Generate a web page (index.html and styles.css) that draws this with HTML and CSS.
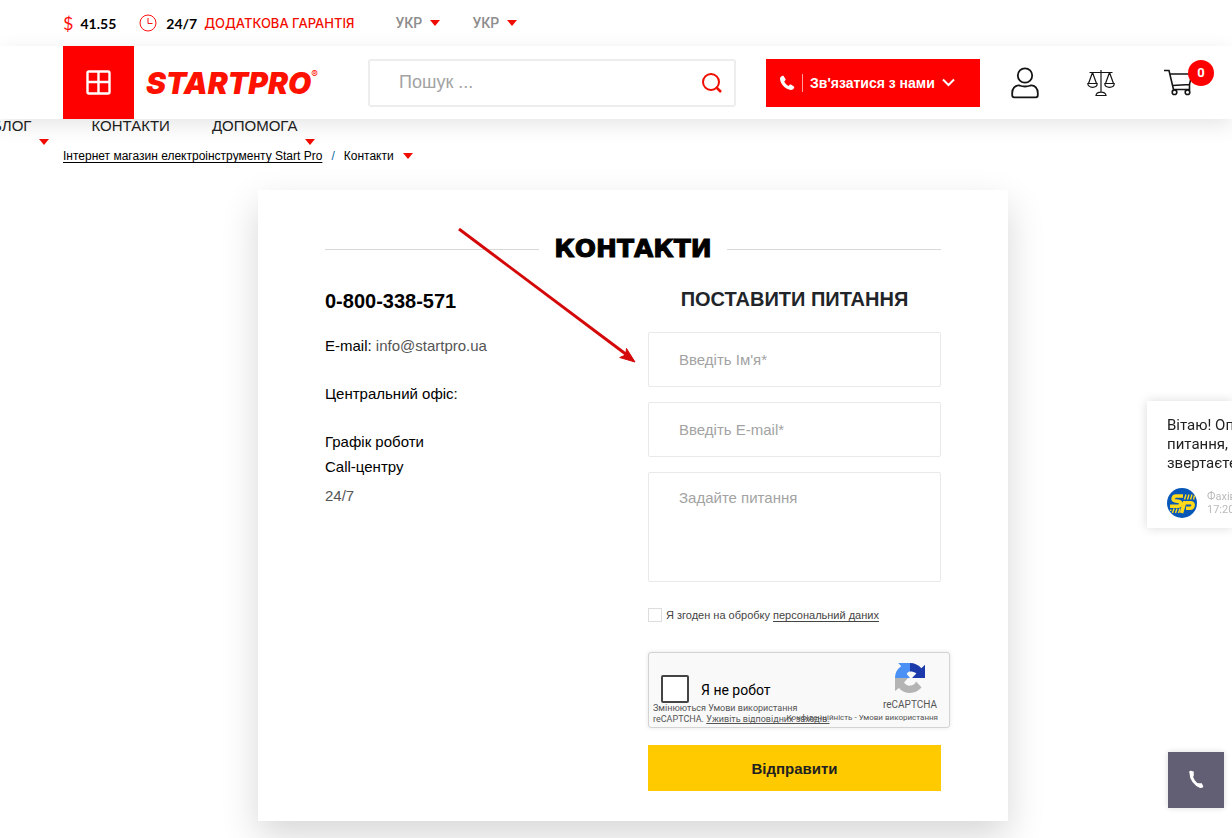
FILE: index.html
```html
<!DOCTYPE html>
<html lang="uk">
<head>
<meta charset="utf-8">
<meta name="viewport" content="width=device-width, initial-scale=1">
<title>Контакти</title>
<link rel="stylesheet" href="styles.css">
</head>
<body>
<div class="topbar">
  <span class="rate"><span class="dollar">$</span>41.55</span>
  <span class="warranty">
    <svg width="18" height="18" viewBox="0 0 18 18" fill="none" stroke="#f11" stroke-width="1"><circle cx="9" cy="9" r="8"/><path d="M9 4v5.500h4.500"/></svg>
    <b>24/7</b> <a href="#">ДОДАТКОВА ГАРАНТІЯ</a>
  </span>
  <label class="lang"><select aria-label="Мова"><option>УКР</option></select><span class="caret"></span></label>
  <label class="lang"><select aria-label="Мова каталогу"><option>УКР</option></select><span class="caret"></span></label>
</div>

<header class="header">
  <button class="catalog" aria-label="Каталог">
    <svg width="25" height="25" viewBox="0 0 25 25" fill="none" stroke="#fff" stroke-width="2.400"><rect x="1.500" y="1.500" width="22" height="22" rx="1.500"/><path d="M12.500 2v21M2 12h21"/></svg>
  </button>
  <a class="logo" href="#">STARTPRO<sup>®</sup></a>
  <form class="search">
    <input type="text" aria-label="Пошук" placeholder="Пошук ...">
    <button type="button" aria-label="Знайти">
      <svg width="22" height="22" viewBox="0 0 22 22" fill="none" stroke="#f10c00" stroke-width="2"><circle cx="11" cy="10" r="8"/><path d="M16 15l5 5" stroke-width="2.500"/></svg>
    </button>
  </form>
  <button class="contact">
    <svg width="16" height="16" viewBox="0 0 16 16" fill="#fff"><path d="M3.400.8C2.300 1.200.8 2.300 1 4.100c.6 5.400 5.500 10.500 11 11 1.500.1 2.800-1.300 3.200-2.500.1-.4 0-.7-.3-1l-3-2c-.4-.3-.9-.2-1.200.1l-1.300 1.200C7.500 9.900 6 8.300 5.200 6.500l1.200-1.200c.3-.3.4-.7.2-1.100L4.600 1.100C4.300.8 3.900.6 3.400.8z"/></svg>
    <span class="divider"></span>
    <span>Зв'язатися з нами</span>
    <svg width="13" height="9" viewBox="0 0 13 9" fill="none" stroke="#fff" stroke-width="2"><path d="M1 1.500l5.500 5.500L12 1.500"/></svg>
  </button>
  <div class="tools">
    <a href="#" aria-label="Кабінет"><svg width="28" height="32" viewBox="0 0 28 32" fill="none" stroke="#151515" stroke-width="1.800"><circle cx="14" cy="8.500" r="7.200"/><path d="M8.500 18.500c3.500 1.300 7.500 1.300 11 0 4.500-.5 7.300 3 7.300 7.500v2.300c0 1.300-.7 2-2 2H3.200c-1.300 0-2-.7-2-2V26c0-4.500 2.800-8 7.300-7.500z"/></svg></a>
    <a href="#" aria-label="Порівняння"><svg width="28" height="28" viewBox="0 0 28 28" fill="none" stroke="#151515" stroke-width="1.200"><path d="M14 1v22M2.500 3.500h23M5.500 3.500l-4 11M5.500 3.500l4 11M22.500 3.500l-4 11M22.500 3.500l4 11M.8 14.500h9.400c0 2-1.800 3.800-4.700 3.800S.8 16.500.8 14.500zM17.800 14.500h9.400c0 2-1.800 3.800-4.700 3.800s-4.700-1.800-4.700-3.800zM9 26.500c.3-2.500 2.300-3.300 5-3.300s4.700.8 5 3.300z"/></svg></a>
    <a class="cart" href="#" aria-label="Кошик"><svg width="30" height="27" viewBox="0 0 30 27" fill="none" stroke="#151515" stroke-width="1.600"><path d="M1 1.500h5l4.500 19M7.200 5H29l-2.500 10.500-17 1M26.500 15.500v5h-16"/><circle cx="11.500" cy="23.200" r="2.300"/><circle cx="24.500" cy="23.200" r="2.300"/></svg><span class="badge">0</span></a>
  </div>
</header>

<nav class="menu">
  <a href="#">БЛОГ<span class="caret"></span></a>
  <a href="#">КОНТАКТИ</a>
  <a href="#">ДОПОМОГА<span class="caret"></span></a>
</nav>

<div class="crumbs">
  <a href="#">Інтернет магазин електроінструменту Start Pro</a>
  <span class="slash">/</span>
  <span>Контакти</span>
  <span class="caret"></span>
</div>

<main class="page">
  <section class="card">
    <h1>КОНТАКТИ</h1>
    <div class="columns">
      <div class="info">
        <h2>0-800-338-571</h2>
        <p>E-mail: <a href="#">info@startpro.ua</a></p>
        <p>Центральний офіс:</p>
        <p>Графік роботи<br>Call-центру</p>
        <p class="hours">24/7</p>
      </div>
      <form class="ask">
        <h2>ПОСТАВИТИ ПИТАННЯ</h2>
        <input class="field" type="text" aria-label="Ім'я" placeholder="Введіть Ім'я*">
        <input class="field" type="email" aria-label="E-mail" placeholder="Введіть E-mail*">
        <textarea class="field area" aria-label="Питання" placeholder="Задайте питання"></textarea>
        <div class="agree">
          <input type="checkbox" id="agree"><label for="agree">Я згоден на обробку</label> <a href="#">персональний даних</a>
        </div>
        <div class="captcha">
          <div class="captcha-check"><input type="checkbox" id="robot"><label for="robot">Я не робот</label></div>
          <div class="captcha-brand">
            <svg width="32" height="32" viewBox="0 0 32 32"><path fill="#4a90f5" d="M16 1v8.500c-1.800.3-3 1.300-3.300 2.500l3.300 4H1C1 11 3 7 7.200 4.200l-3-3.200z"/><path fill="#1c3aa9" d="M16 1c4.600 0 8.600 2 11.400 5.200L31 2.800V16H18l4.400-4.500C20.500 10 18.500 9.500 16 9.500z"/><path fill="#b4b4b4" d="M1 16h13l-4 4.500c1.500 2.500 4 3.500 7 3 2.500-.4 4.200-1.500 5-4l5.500 5.800C25 28.800 20.500 31 16 31c-4.500 0-8.300-1.700-11-5l-4 3z"/></svg>
            <span>reCAPTCHA</span>
          </div>
          <p class="captcha-note">Змінюються Умови використання<br>reCAPTCHA. <a href="#">Уживіть відповідних заходів.</a></p>
          <p class="captcha-terms"><a href="#">Конфіденційність</a> - <a href="#">Умови використання</a></p>
        </div>
        <button class="submit" type="button">Відправити</button>
      </form>
    </div>
    <svg class="arrow" width="180" height="136" viewBox="0 0 180 136"><path d="M1 1l168 126" stroke="#d40808" stroke-width="3"/><path d="M177 134l-8.500-13.500-.8 6.500-6 2.500z" fill="#d40808" stroke="#d40808"/></svg>
  </section>
</main>

<aside class="chat">
  <p>Вітаю! Оп<br>питання,<br>звертаєте</p>
  <div class="agent">
    <svg width="30" height="30" viewBox="0 0 30 30"><circle cx="15" cy="15" r="15" fill="#0757b8"/><g fill="none" stroke="#ffd91a"><path stroke-width="3.600" d="M16 8H9c-3 0-4 4-1 4.700l4 .8c3 .7 2 4.700-1 4.700H3M14.500 25l3-10.200h6.500c3.500 0 2.500 5.500-1 5.500H19"/><path stroke-width="1.400" d="M17.500 11.500l1.500-5M20.500 11.500l1.500-5M23.500 11.500l1.500-5M26.500 11.500l1-4M4 21.500L3.500 23M7 20.500L5.500 25M10 20.500L8.500 25M13 20.500L11.500 25"/></g></svg>
    <span>Фахів<br>17:20</span>
  </div>
</aside>

<button class="call" aria-label="Подзвонити">
  <svg width="18" height="22" viewBox="0 0 18 22" fill="none" stroke="#fff" stroke-linecap="round"><path stroke-width="3" d="M4 4c0 6 4 11.500 9.500 13.500"/><path stroke-width="2.500" d="M3.500 3l2 .5v3M10.500 15.500l3.500 0 1 2"/></svg>
</button>
</body>
</html>
```
FILE: styles.css
```css
* { box-sizing: border-box; }
body {
  margin: 0;
  min-height: 100vh;
  background: #fff;
  color: #000;
  font-family: "Liberation Sans", Arial, sans-serif;
  font-size: 15px;
}
h1, h2, p { margin: 0; }
a { color: inherit; text-decoration: none; }
button, input, select, textarea { font: inherit; margin: 0; }
button { border: 0; padding: 0; cursor: pointer; }
svg { display: block; flex: none; }
.caret {
  flex: none;
  width: 10px;
  border: 5px solid transparent;
  border-top: 6px solid #f10c00;
  border-bottom: 0;
}

.topbar {
  display: flex;
  align-items: center;
  height: 46px;
  padding-left: 63px;
  font-family: Lato, sans-serif;
  font-size: 14px;
}
.rate { display: flex; align-items: center; gap: 7px; margin-right: 23px; font-weight: 700; }
.dollar { color: #f11; font-size: 18px; font-weight: 400; }
.warranty { display: flex; align-items: center; gap: 7px; margin-right: 41px; }
.warranty svg { margin-right: 2px; }
.warranty a { color: #f10c00; font: 500 13px Inter, sans-serif; }
.lang { display: flex; align-items: center; gap: 8px; margin-right: 32px; }
.lang select {
  appearance: none;
  border: 0;
  padding: 0;
  background: none;
  color: #8d8d8d;
  font-family: Roboto, sans-serif;
  font-weight: 500;
}

.header {
  position: relative;
  display: flex;
  align-items: center;
  height: 73px;
  padding: 0 18px 0 63px;
  background: #fff;
  box-shadow: 0 6px 20px rgba(0, 0, 0, .1);
}
.catalog { display: grid; place-items: center; align-self: stretch; width: 71px; background: #f00; }
.logo {
  display: flex;
  width: 222px;
  margin-left: 12px;
  color: #f10;
  font: italic 900 30px/32px Inter, sans-serif;
}
.logo sup { font: 400 10px/14px Inter, sans-serif; }
.search {
  display: flex;
  align-items: center;
  flex: 1;
  height: 48px;
  padding: 0 12px 0 29px;
  border: 2px solid #ededed;
  border-radius: 3px;
}
.search input { flex: 1; min-width: 0; border: 0; padding: 0; outline: 0; font-size: 18px; }
::placeholder { color: #a3a3a3; opacity: 1; }
.search button { background: none; }
.contact {
  display: flex;
  align-items: center;
  gap: 7px;
  width: 214px;
  height: 48px;
  margin-left: 30px;
  padding-left: 13px;
  background: #f00;
  color: #fff;
  font: 700 14px "Liberation Sans", Arial, sans-serif;
}
.divider { width: 1px; height: 18px; background: #ff9c9c; }
.tools { display: flex; align-items: center; gap: 48px; margin-left: 31px; }
.cart { position: relative; width: 51px; }
.badge {
  position: absolute;
  top: -9px;
  right: 0;
  width: 26px;
  border-radius: 50%;
  background: #f00;
  color: #fff;
  font: 700 13px/26px Roboto, sans-serif;
  text-align: center;
}

.menu { display: flex; gap: 42px; height: 26px; margin-left: -8px; color: #212121; line-height: 14px; }
.menu a { display: flex; gap: 8px; }
.menu .caret { align-self: flex-end; }
.crumbs { display: flex; align-items: center; gap: 9px; height: 22px; padding-left: 63px; font-size: 12px; }
.crumbs a { text-decoration: underline; text-underline-offset: 2px; }
.slash { color: #0a6aa8; }

.page { padding: 23px 29px 17px 63px; overflow: hidden; }
.card {
  position: relative;
  max-width: 750px;
  margin: 0 auto;
  padding: 42px 67px 30px;
  background: #fff;
  box-shadow: 0 15px 35px rgba(0, 0, 0, .16);
}
h1 {
  display: flex;
  align-items: center;
  gap: 15px;
  font: 700 25px/34px "DejaVu Sans", sans-serif;
  -webkit-text-stroke: 1px #000;
}
h1::before, h1::after { content: ""; flex: 1; height: 1px; background: #d9d9d9; }
.columns { display: grid; grid-template-columns: repeat(2, minmax(0, 1fr)); gap: 30px; margin-top: 21px; }
.info { padding-top: 2px; line-height: 25px; }
.info h2 { margin-bottom: 20px; font-size: 20px; line-height: 24px; }
.info p { margin-bottom: 23px; }
.info p a, .hours { color: #555; }
.info .hours { margin-top: -19px; }
.ask { display: flex; flex-direction: column; gap: 15px; }
.ask h2 { margin-bottom: 6px; color: #212529; font-size: 20px; line-height: 24px; text-align: center; }
.field {
  width: 100%;
  height: 55px;
  padding: 0 30px;
  border: 1px solid #e9e9e9;
  border-radius: 2px;
  background: #fff;
}
.area { height: 110px; padding-top: 16px; resize: none; }
.agree { display: flex; align-items: center; gap: 3px; height: 16px; margin: 10px 0 14px; color: #444; font-size: 11px; }
.agree input { appearance: none; width: 14px; height: 14px; border: 1px solid #ddd; }
.agree label { margin-left: 1px; }
.agree a { border-bottom: 1px solid #444; }
.captcha {
  position: relative;
  display: flex;
  justify-content: space-between;
  width: 302px;
  height: 76px;
  padding: 9px 12px;
  border: 1px solid #d3d3d3;
  border-radius: 3px;
  background: #f9f9f9;
  box-shadow: 0 0 4px rgba(0, 0, 0, .1);
  font-family: Roboto, sans-serif;
}
.captcha-check { display: flex; gap: 12px; padding-top: 13px; font-size: 14px; line-height: 30px; }
.captcha-check input { appearance: none; width: 28px; height: 28px; border: 2px solid #444; border-radius: 2px; background: #fff; }
.captcha-brand { display: flex; flex-direction: column; align-items: center; gap: 5px; color: #555; font-size: 10px; line-height: 12px; }
.captcha-note { position: absolute; left: 4px; bottom: 2px; color: #555; font-size: 9px; line-height: 11px; }
.captcha-note a { text-decoration: underline; }
.captcha-terms { position: absolute; right: 11px; bottom: 4px; color: #555; font-size: 8px; line-height: 10px; }
.submit { height: 46px; margin-top: 2px; background: #ffca00; color: #212121; font-weight: 700; }
.arrow { position: absolute; left: 200px; top: 38px; }

.chat {
  position: fixed;
  top: 401px;
  right: 0;
  width: 85px;
  padding: 15px 0 10px 20px;
  background: #fff;
  box-shadow: 0 0 10px rgba(0, 0, 0, .15);
  color: #212121;
  font: 15px/19px Roboto, sans-serif;
  white-space: nowrap;
  overflow: hidden;
}
.agent { display: flex; align-items: center; gap: 10px; margin-top: 15px; color: #bbb; font-size: 11px; line-height: 13px; }
.call {
  position: fixed;
  right: 8px;
  bottom: 30px;
  display: grid;
  place-items: center;
  width: 56px;
  height: 56px;
  background: #625e73;
  box-shadow: 0 0 6px rgba(0, 0, 0, .15);
}
```
